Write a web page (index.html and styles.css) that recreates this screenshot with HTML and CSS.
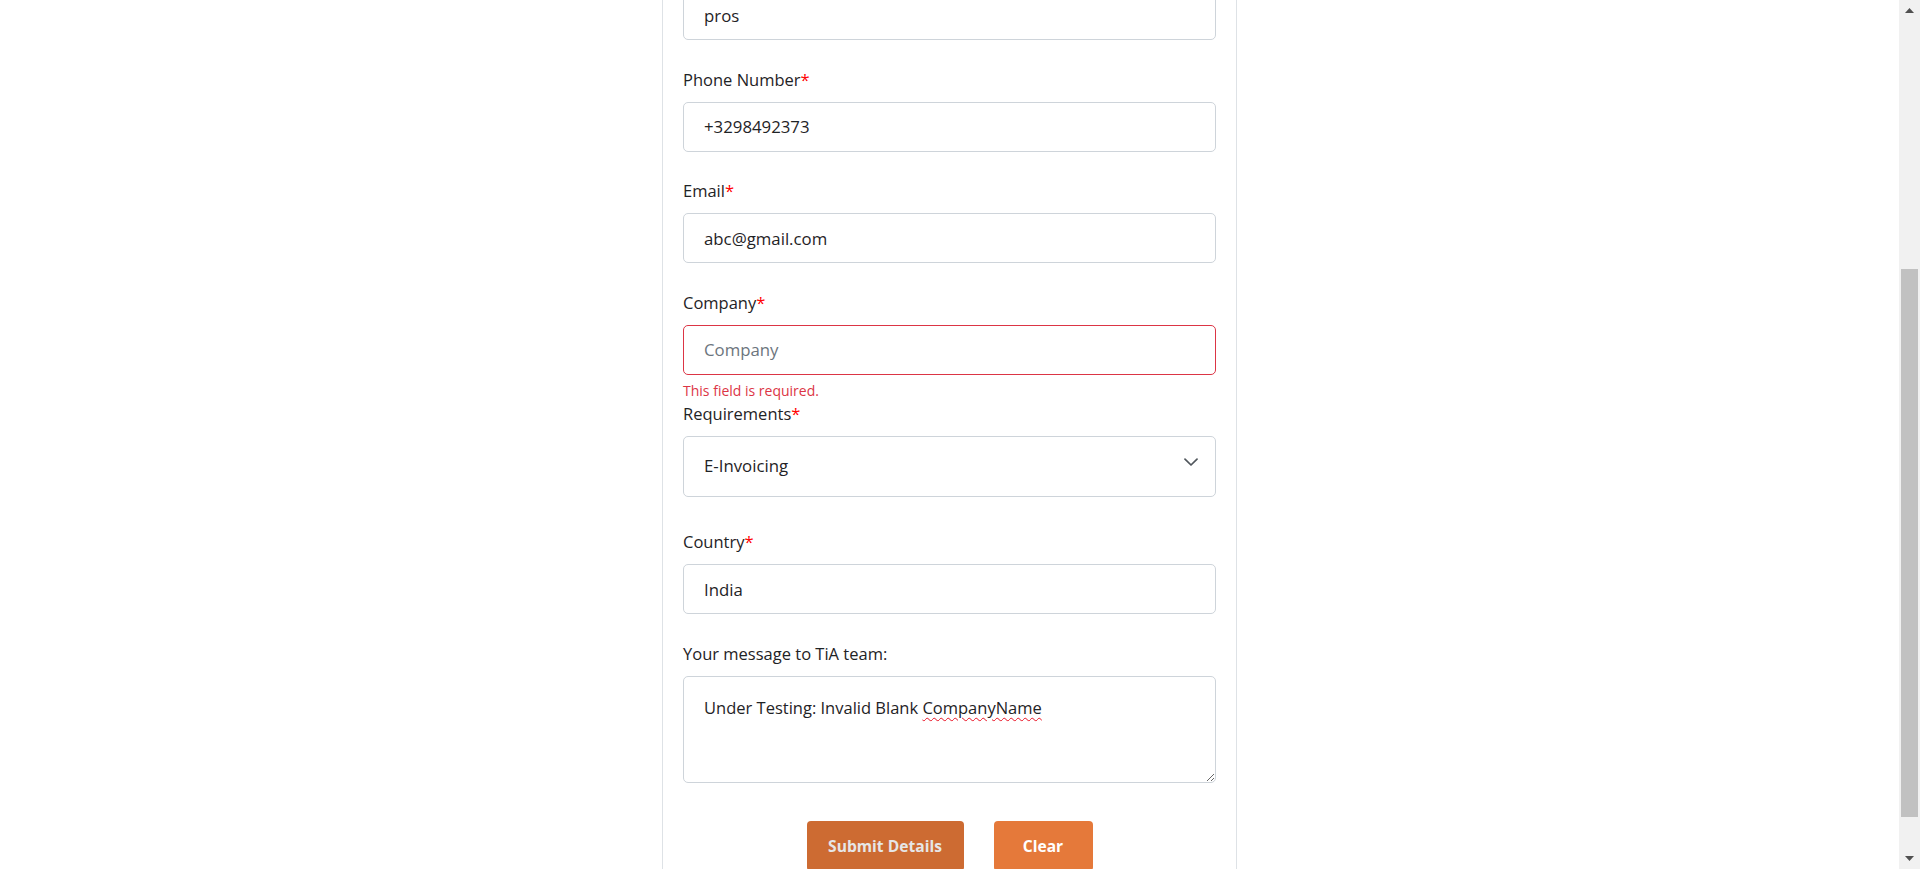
FILE: index.html
```html
<!DOCTYPE html>
<html lang="en">
<head>
<meta charset="utf-8">
<title>Contact the TiA team</title>
<link rel="stylesheet" href="styles.css">
</head>
<body>
<div class="page">
  <main class="viewport">
    <form class="card" novalidate>
      <div class="field field-first">
        <input class="control" type="text" value="pros" aria-label="Designation">
      </div>

      <div class="field">
        <label class="label" for="phone">Phone Number<span class="req">*</span></label>
        <input class="control" id="phone" type="text" value="+3298492373">
      </div>

      <div class="field">
        <label class="label" for="email">Email<span class="req">*</span></label>
        <input class="control" id="email" type="text" value="abc@gmail.com">
      </div>

      <div class="field field-error">
        <label class="label" for="company">Company<span class="req">*</span></label>
        <input class="control invalid" id="company" type="text" placeholder="Company">
        <div class="feedback">This field is required.</div>
      </div>

      <div class="field field-select">
        <label class="label" for="req">Requirements<span class="req">*</span></label>
        <div class="select-wrap">
          <select class="control select" id="req">
            <option>E-Invoicing</option>
          </select>
          <svg class="chevron" width="14" height="8" viewBox="0 0 14 8" aria-hidden="true"><path d="M1 1.2l6 5.8 6-5.8" fill="none" stroke="#50565c" stroke-width="1.7" stroke-linecap="round" stroke-linejoin="round"/></svg>
        </div>
      </div>

      <div class="field">
        <label class="label" for="country">Country<span class="req">*</span></label>
        <input class="control" id="country" type="text" value="India">
      </div>

      <div class="field field-message">
        <label class="label" for="msg">Your message to TiA team:</label>
        <div class="control message" id="msg" role="textbox" aria-multiline="true">Under Testing: Invalid Blank <span class="typo">CompanyName</span></div>
      </div>

      <div class="actions">
        <button class="btn btn-submit" type="button">Submit Details</button>
        <button class="btn btn-clear" type="button">Clear</button>
      </div>
    </form>
  </main>

  <div class="scrollbar" aria-hidden="true">
    <div class="sb-btn">
      <svg width="9" height="5" viewBox="0 0 9 5"><polygon points="0,5 4.5,0 9,5" fill="#505050"/></svg>
    </div>
    <div class="sb-track"><div class="sb-thumb"></div></div>
    <div class="sb-btn">
      <svg width="9" height="5" viewBox="0 0 9 5"><polygon points="0,0 9,0 4.5,5" fill="#505050"/></svg>
    </div>
  </div>
</div>
</body>
</html>
```

FILE: styles.css
```css
html, body {
  margin: 0;
  height: 100%;
}

body {
  font-family: "Open Sans", "Noto Sans", sans-serif;
  font-size: 16.5px;
  color: #212529;
  background: #ffffff;
  overflow: hidden;
}

.page {
  display: flex;
  height: 100vh;
}

.viewport {
  flex: 1;
  min-width: 0;
  overflow: hidden;
}

.card {
  width: 575px;
  box-sizing: border-box;
  margin: 0 auto;
  padding: 0 20px 40px;
  border: 1px solid #dee2e6;
  border-top: 0;
  background: #ffffff;
}

.field {
  margin-bottom: 27.5px;
}

.field-first {
  margin-top: -10px;
}

.label {
  display: block;
  line-height: 24px;
  margin-bottom: 10px;
  color: #1f2326;
}

.req {
  color: #ff0000;
}

.control {
  display: block;
  width: 100%;
  box-sizing: border-box;
  height: 50px;
  margin: 0;
  padding: 0 20px;
  border: 1px solid #ced4da;
  border-radius: 5px;
  background: #ffffff;
  font-family: inherit;
  font-size: 16.8px;
  line-height: 24px;
  color: #1f2326;
  outline: none;
}

.control::placeholder {
  color: #6c757d;
  opacity: 1;
}

.control.invalid {
  border-color: #dc3545;
}

.field-error {
  margin-bottom: 0;
}

.feedback {
  margin-top: 5px;
  font-size: 14px;
  line-height: 22px;
  color: #dc3545;
}

.field-select {
  margin-bottom: 33.5px;
}

.select-wrap {
  position: relative;
}

.select {
  height: 61px;
  appearance: none;
  -webkit-appearance: none;
  padding-right: 48px;
}

.chevron {
  position: absolute;
  right: 18px;
  top: 22px;
  pointer-events: none;
}

.message {
  height: 107px;
  padding: 19px 20px;
  overflow: auto;
  resize: vertical;
  white-space: pre-wrap;
  font-size: 16.5px;
}

.typo {
  text-decoration: underline wavy #e81123;
  text-decoration-thickness: 1px;
  text-underline-offset: 3px;
}

.actions {
  display: flex;
  justify-content: center;
  gap: 30px;
  margin-top: 38px;
}

.btn {
  height: 50px;
  border: 0;
  border-radius: 4px;
  font-family: "Open Sans", "Noto Sans", sans-serif;
  font-size: 15.6px;
  font-weight: 700;
  color: #ffffff;
  cursor: pointer;
}

.btn-submit {
  width: 157px;
  background: #cd6b32;
  color: #e6e6e6;
}

.btn-clear {
  width: 99px;
  background: #e5793a;
}

.scrollbar {
  flex: none;
  width: 21px;
  display: flex;
  flex-direction: column;
  background: #f1f1f1;
}

.sb-btn {
  height: 21px;
  display: flex;
  align-items: center;
  justify-content: center;
}

.sb-track {
  flex: 1;
  padding: 0 2px;
}

.sb-thumb {
  margin-top: 248px;
  height: 548px;
  background: #c1c1c1;
}
```
